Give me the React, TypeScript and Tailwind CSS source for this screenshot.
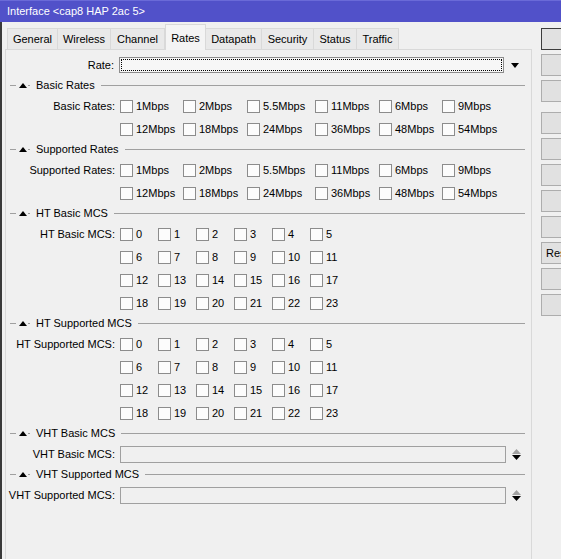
import React from 'react';

const tabs = [
  { name: 'General', w: 'w-[51px]' },
  { name: 'Wireless', w: 'w-[54px]' },
  { name: 'Channel', w: 'w-[55px]' },
  { name: 'Rates', w: 'w-[41px]', active: true },
  { name: 'Datapath', w: 'w-[57px]' },
  { name: 'Security', w: 'w-[53px]' },
  { name: 'Status', w: 'w-[44px]' },
  { name: 'Traffic', w: 'w-[43px]' },
];

const rateRows = [
  ['1Mbps', '2Mbps', '5.5Mbps', '11Mbps', '6Mbps', '9Mbps'],
  ['12Mbps', '18Mbps', '24Mbps', '36Mbps', '48Mbps', '54Mbps'],
];

const mcsRows = [0, 1, 2, 3].map(r => [0, 1, 2, 3, 4, 5].map(c => String(r * 6 + c)));

const Check = ({ text }: { text: string }) => (
  <div className="flex items-center">
    <span className="h-[13px] w-[13px] shrink-0 border border-[#8c8c8c] bg-[#fcfcfc]" />
    <span className="ml-[3px] whitespace-nowrap">{text}</span>
  </div>
);

const Header = ({ title }: { title: string }) => (
  <div className="flex h-[18px] items-center">
    <div className="ml-[4px] h-px w-[6px] bg-[#a0a0a0]" />
    <svg className="ml-[3px]" width="8" height="5" viewBox="0 0 8 5">
      <path d="M4 0L8 5H0Z" fill="#000" />
    </svg>
    <div className="ml-[1px] h-px w-[2px] bg-[#a0a0a0]" />
    <span className="ml-[6px] whitespace-nowrap">{title}</span>
    <div className="ml-[6px] mr-[6px] h-px flex-1 bg-[#a0a0a0]" />
  </div>
);

const Row = ({ label, children }: { label?: string; children: React.ReactNode }) => (
  <div className="flex h-[23px] items-center pt-[2px]">
    <div className="w-[109px] whitespace-nowrap text-right">{label}</div>
    <div className="ml-[5px] flex items-center">{children}</div>
  </div>
);

const RateGroup = ({ title, label }: { title: string; label: string }) => (
  <>
    <Header title={title} />
    {rateRows.map((row, i) => (
      <Row key={i} label={i === 0 ? label : undefined}>
        <div className="grid grid-cols-[63px_64px_68px_64px_63px_70px]">
          {row.map(t => <Check key={t} text={t} />)}
        </div>
      </Row>
    ))}
  </>
);

const McsGroup = ({ title, label }: { title: string; label: string }) => (
  <>
    <Header title={title} />
    {mcsRows.map((row, i) => (
      <Row key={i} label={i === 0 ? label : undefined}>
        <div className="grid grid-cols-[38px_38px_38px_38px_38px_38px]">
          {row.map(t => <Check key={t} text={t} />)}
        </div>
      </Row>
    ))}
  </>
);

const Spinner = () => (
  <svg className="ml-[6px]" width="9" height="11" viewBox="0 0 9 11">
    <path d="M4.5 0L9 5H0Z" fill="#a0a0a0" />
    <path d="M0 6H9L4.5 11Z" fill="#000" />
  </svg>
);

const VhtGroup = ({ title, label }: { title: string; label: string }) => (
  <>
    <Header title={title} />
    <Row label={label}>
      <div className="h-[17px] w-[386px] border border-[#a0a0a0] bg-[#f0f0f0]" />
      <Spinner />
    </Row>
  </>
);

const SideButton = ({ text, primary }: { text?: string; primary?: boolean }) => (
  <div
    className={`flex h-[22px] w-[100px] items-center overflow-hidden whitespace-nowrap bg-[#e1e1e1] pl-[4px] border ${
      primary ? 'border-[#3c3c3c]' : 'border-[#adadad]'
    }`}
  >
    {text}
  </div>
);

export default function App() {
  return (
    <div className="h-[559px] w-[561px] overflow-hidden bg-[#f0f0f0] font-['Liberation_Sans',Arial,sans-serif] text-[11px] text-black">
      {/* title bar */}
      <div className="flex h-[22px] items-center border-t border-[#6a6ad8] bg-[#5151c9] pl-[7px] text-white">
        Interface &lt;cap8 HAP 2ac 5&gt;
      </div>

      <div className="flex h-[537px]">
        <div className="w-[2px] shrink-0 bg-[#3a3a3a]" />

        <div className="w-[530px] shrink-0">
          {/* tabs */}
          <div className="flex h-[27px] items-end pl-[5px] pt-[2px]">
            {tabs.map(t =>
              t.active ? (
                <div
                  key={t.name}
                  className={`${t.w} relative z-10 -mb-px flex h-[26px] items-start justify-center border border-b-0 border-[#d9d9d9] bg-[#f4f4f4] pt-[5px]`}
                >
                  {t.name}
                </div>
              ) : (
                <div
                  key={t.name}
                  className={`${t.w} -ml-px flex h-[21px] items-center justify-center border border-b-0 border-[#d9d9d9] bg-[#e9e9e9] first:ml-0`}
                >
                  {t.name}
                </div>
              )
            )}
          </div>

          {/* tab page */}
          <div className="ml-[3px] h-[520px] w-[527px] border border-[#d9d9d9] bg-[#f0f0f0] pt-[4px]">
            <div className="flex h-[22px] items-center">
              <div className="w-[108px] text-right">Rate:</div>
              <div className="ml-[5px] h-[16px] w-[385px] border border-[#8c8c8c] bg-[#f7f7f7] p-px">
                <div className="h-full w-full border border-dotted border-black" />
              </div>
              <svg className="ml-[7px]" width="8" height="5" viewBox="0 0 8 5">
                <path d="M0 0H8L4 5Z" fill="#000" />
              </svg>
            </div>

            <RateGroup title="Basic Rates" label="Basic Rates:" />
            <RateGroup title="Supported Rates" label="Supported Rates:" />
            <McsGroup title="HT Basic MCS" label="HT Basic MCS:" />
            <McsGroup title="HT Supported MCS" label="HT Supported MCS:" />
            <VhtGroup title="VHT Basic MCS" label="VHT Basic MCS:" />
            <VhtGroup title="VHT Supported MCS" label="VHT Supported MCS:" />
          </div>
        </div>

        {/* side buttons */}
        <div className="ml-[9px] flex flex-col pt-[6px]">
          <div className="flex flex-col gap-[4px]">
            <SideButton primary />
            <SideButton />
            <SideButton />
          </div>
          <div className="mt-[10px] flex flex-col gap-[4px]">
            <SideButton />
            <SideButton />
            <SideButton />
            <SideButton />
            <SideButton />
            <SideButton text="Reset Configuration" />
            <SideButton />
            <SideButton />
          </div>
        </div>
      </div>
    </div>
  );
}
